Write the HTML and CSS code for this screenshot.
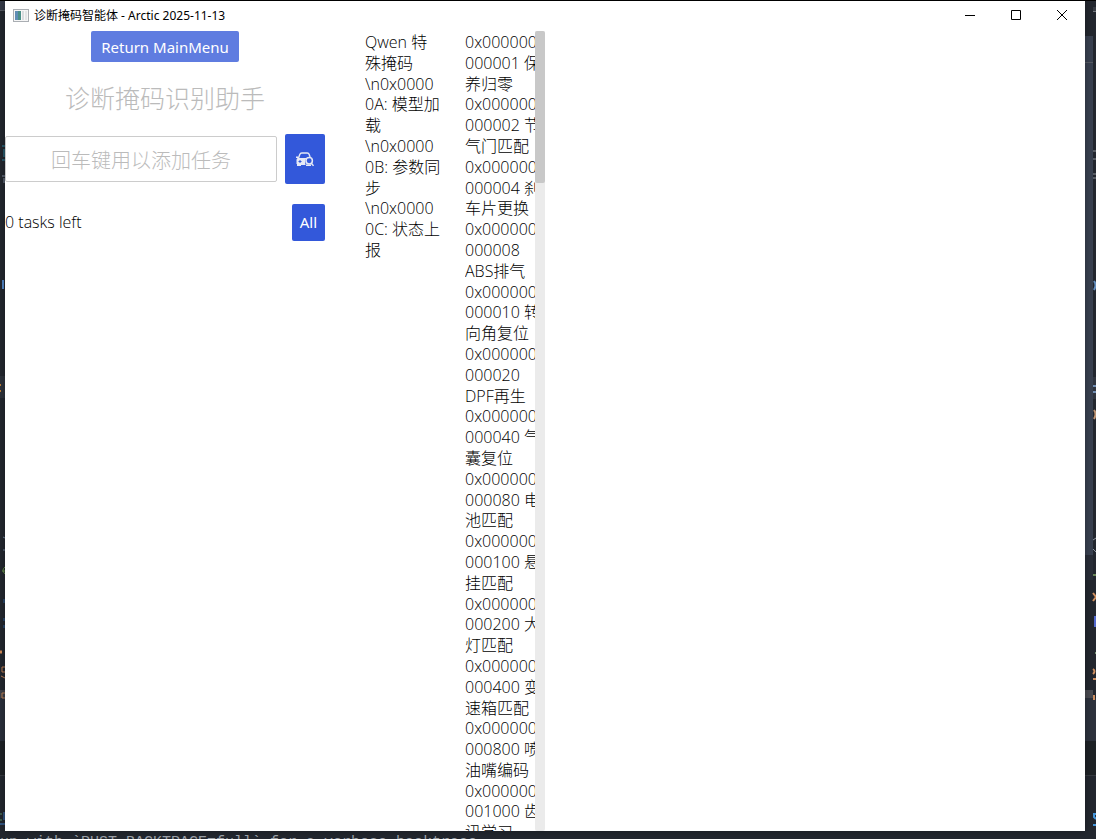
FILE: index.html
```
<!DOCTYPE html>
<html lang="zh-CN">

<head>
    <meta charset="UTF-8">
    <meta name="viewport" content="width=device-width, initial-scale=1.0">
    <title>诊断掩码智能体 - Arctic 2025-11-13</title>
    <link rel="stylesheet" href="styles.css">
</head>

<body>
    <!-- Editor behind the window -->
    <div class="desktop" aria-hidden="true">
        <svg class="edge edge-left" width="5" height="839">
            <rect width="5" height="839" fill="#23272f" />
            <rect width="5" height="10" fill="#343a48" />
            <rect y="10" width="5" height="1" fill="#555962" />
            <rect y="376" width="5" height="22" fill="#2d323b" />
            <rect y="690" width="5" height="8" fill="#3f4249" />
            <rect y="698" width="5" height="43" fill="#2b303c" />
            <rect y="741" width="5" height="34" fill="#1e2226" />
            <rect y="775" width="5" height="1" fill="#363a40" />
            <path d="M2 146h3M4 149v8M2 160h3" stroke="#2c8ba8" fill="none" />
            <path d="M2 176h3M4 178v5" stroke="#8793a8" fill="none" />
            <path d="M3 280v9" stroke="#5387c8" stroke-width="2" />
            <path d="M0 385h1M0 391h1" stroke="#c07f35" stroke-width="2" />
            <path d="M3 537l2 1M3 550h2" stroke="#73869e" />
            <path d="M5 567q-4 3 0 7M2 571h3" stroke="#68914c" fill="none" />
            <path d="M4 599v4M4 618v3M4 625v3" stroke="#2e65a0" />
            <path d="M0 652h2" stroke="#d28a57" stroke-width="3" />
            <path d="M5 667H2v5h3M1 676l4 2M5 693H2v5h3" stroke="#bf8057" fill="none" />
            <path d="M0 814h2M0 820h2" stroke="#5a946c" />
            <path d="M4 812v8M0 824h5" stroke="#4384d5" />
        </svg>
        <svg class="edge edge-right" width="11" height="839">
            <rect width="11" height="839" fill="#23272f" />
            <rect y="36" width="8" height="519" fill="#394150" />
            <rect y="62" width="8" height="1" fill="#575b64" />
            <rect y="555" width="8" height="25" fill="#292e38" />
            <rect x="8" y="7" width="3" height="4" fill="#383c44" />
            <rect x="8" y="11" width="3" height="1" fill="#73777e" />
            <rect x="8" y="377" width="3" height="22" fill="#30353f" />
            <rect y="690" width="8" height="8" fill="#4a4b51" />
            <rect y="698" width="11" height="43" fill="#2d323d" />
            <rect y="741" width="11" height="34" fill="#1e2226" />
            <rect y="775" width="11" height="1" fill="#373b41" />
            <path d="M8 151h3M8 159h3M8 174h3M8 178h3" stroke="#8d9199" />
            <path d="M9 281q3 4 0 9" stroke="#648fc0" fill="none" stroke-width="2" />
            <path d="M8 386h3M8 392h3" stroke="#718eb3" stroke-width="2" />
            <path d="M9 410q3 4 0 9" stroke="#c09573" fill="none" stroke-width="2" />
            <path d="M11 538l-3 2M8 549l3 3" stroke="#9097a2" />
            <path d="M8 575h3" stroke="#6a8759" stroke-width="2" />
            <path d="M8 593l3 4l-3 4" stroke="#cf9061" fill="none" stroke-width="2" />
            <path d="M10 616v11" stroke="#5268ce" stroke-width="2" />
            <path d="M10 653h1" stroke="#749174" stroke-width="2" />
            <path d="M8 669q3 2 0 5M8 679h3M9 695v5" stroke="#cf9061" fill="none" stroke-width="2" />
            <path d="M11 814H9v3l2 2M8 825h3" stroke="#4596dc" fill="none" stroke-width="2" />
        </svg>
    </div>

    <div class="window">
        <div class="titlebar">
            <svg class="app-icon" width="16" height="14" viewBox="0 0 16 14">
                <rect x="0.5" y="0.5" width="15" height="12" fill="#f6f6f6" stroke="#aaaeb3" />
                <rect x="2" y="2" width="6" height="9" fill="#4a8f88" />
                <path d="M2 2h3v9H2z" fill="#5f8db5" />
                <path d="M9 2h2v9H9z" fill="#d9dcdf" />
                <path d="M12 2h2v9h-2z" fill="#e3e5e7" />
            </svg>
            <span class="window-title">诊断掩码智能体 - Arctic 2025-11-13</span>
            <div class="window-controls">
                <button type="button" class="window-button" aria-label="Minimize">
                    <svg width="10" height="10" viewBox="0 0 10 10"><path d="M0 5.5h10" stroke="#000" /></svg>
                </button>
                <button type="button" class="window-button" aria-label="Maximize">
                    <svg width="10" height="10" viewBox="0 0 10 10"><path d="M0.5 0.5h9v9h-9z" fill="none" stroke="#000" /></svg>
                </button>
                <button type="button" class="window-button" aria-label="Close">
                    <svg width="10" height="10" viewBox="0 0 10 10"><path d="M0 0l10 10M10 0L0 10" stroke="#000" /></svg>
                </button>
            </div>
        </div>

        <main class="content">
            <section class="task-panel">
                <button type="button" class="button return-button">Return MainMenu</button>
                <h1 class="heading">诊断掩码识别助手</h1>
                <form class="task-form">
                    <input type="text" class="task-input" placeholder="回车键用以添加任务" aria-label="回车键用以添加任务">
                    <button type="button" class="button scan-button" aria-label="Diagnose">
                        <svg width="18" height="15" viewBox="0 0 18 15">
                            <path d="M2.5 6L3.8 2.4Q4.3 1 5.8 1h5.4q1.5 0 2 1.4l.9 2.6" fill="none" stroke="#e6e9f5" stroke-width="1.4" />
                            <path d="M0 4.5h2L3 6h7.5Q8.2 8.5 9.6 13H5v1H1v-2H.5V7.5L1.5 6H0z" fill="#e6e9f5" />
                            <path d="M2.5 9.5h3M4 8v3" stroke="#3358da" />
                            <circle cx="13.2" cy="8.8" r="3.2" fill="#3358da" stroke="#e6e9f5" stroke-width="1.5" />
                            <path d="M15.3 11.2l2.2 2.6M10 13.3h5" stroke="#e6e9f5" stroke-width="1.4" />
                        </svg>
                    </button>
                </form>
                <div class="task-footer">
                    <span>0 tasks left</span>
                    <button type="button" class="button filter-button">All</button>
                </div>
            </section>

            <section class="qwen-masks">Qwen 特<br>殊掩码<br>\n0x0000<br>0A: 模型加<br>载<br>\n0x0000<br>0B: 参数同<br>步<br>\n0x0000<br>0C: 状态上<br>报</section>

            <section class="mask-list">
                <div class="mask-text">
                    <p>0x000000<br>000001 保<br>养归零</p>
                    <p>0x000000<br>000002 节<br>气门匹配</p>
                    <p>0x000000<br>000004 刹<br>车片更换</p>
                    <p>0x000000<br>000008<br>ABS排气</p>
                    <p>0x000000<br>000010 转<br>向角复位</p>
                    <p>0x000000<br>000020<br>DPF再生</p>
                    <p>0x000000<br>000040 气<br>囊复位</p>
                    <p>0x000000<br>000080 电<br>池匹配</p>
                    <p>0x000000<br>000100 悬<br>挂匹配</p>
                    <p>0x000000<br>000200 大<br>灯匹配</p>
                    <p>0x000000<br>000400 变<br>速箱匹配</p>
                    <p>0x000000<br>000800 喷<br>油嘴编码</p>
                    <p>0x000000<br>001000 齿<br>讯学习</p>
                </div>
                <div class="scroll-track">
                    <div class="scroll-thumb"></div>
                </div>
            </section>
        </main>
    </div>

    <div class="terminal">un with `RUST_BACKTRACE=full` for a verbose backtrace.</div>
</body>

</html>
```

FILE: styles.css
```
* {
    box-sizing: border-box;
}

body {
    display: flex;
    flex-direction: column;
    height: 100vh;
    margin: 0;
    overflow: hidden;
    background-color: #23272f;
    border-top: 1px solid #000;
    color: #000;
    font-family: "Open Sans", "Noto Sans CJK SC", sans-serif;
    font-size: 16px;
    font-weight: 300;
    line-height: 1.3;
}

/* Editor visible around the window */
.desktop {
    position: absolute;
    top: 0;
    left: 0;
    right: 0;
    height: 100vh;
    overflow: hidden;
    border-top: 1px solid #000;
}

.edge {
    position: absolute;
    top: -1px;
}

.edge-left {
    left: 0;
}

.edge-right {
    right: 0;
}

.terminal {
    position: relative;
    flex: none;
    height: 8px;
    padding-top: 2px;
    overflow: hidden;
    color: #9a9fa6;
    font-family: "Liberation Mono", monospace;
    font-size: 15px;
    line-height: 20px;
    white-space: nowrap;
}

/* Application window */
.window {
    position: relative;
    display: flex;
    flex-direction: column;
    flex: 1;
    min-height: 0;
    margin: 0 11px 0 5px;
    background-color: #fff;
    box-shadow: 0 0 8px rgba(0, 0, 0, 0.35);
}

.titlebar {
    display: flex;
    align-items: center;
    flex: none;
    height: 30px;
    padding-left: 8px;
    font-size: 12px;
    font-weight: 400;
}

.app-icon {
    margin-right: 5px;
}

.window-title {
    font-family: "Noto Sans", "Noto Sans CJK SC", sans-serif;
}

.window-controls {
    display: flex;
    height: 100%;
    margin-left: auto;
}

.window-button {
    display: flex;
    align-items: center;
    justify-content: center;
    width: 46px;
    padding: 0 0 2px;
    border: none;
    background: none;
}

.content {
    display: flex;
    flex: 1;
    min-height: 0;
}

/* Task panel */
.task-panel {
    display: flex;
    flex-direction: column;
    align-items: stretch;
    gap: 20px;
    width: 320px;
    margin-right: 40px;
}

.button {
    border: none;
    border-radius: 2px;
    background-color: #3358da;
    color: #fff;
    font-family: "Noto Sans", sans-serif;
    font-size: 15px;
    line-height: 21px;
    cursor: pointer;
}

.return-button {
    align-self: center;
    padding: 6px 10px 4px;
    background-color: #5f7ce0;
}

.heading {
    margin: 0;
    color: #bbb;
    font-size: 25px;
    font-weight: 300;
    line-height: 32px;
    text-align: center;
}

.task-form {
    display: flex;
    align-items: center;
    gap: 8px;
}

.task-input {
    flex: 1;
    min-width: 0;
    height: 46px;
    padding: 2px 10px 0;
    border: 1px solid #ccc;
    border-radius: 2px;
    font-family: inherit;
    font-size: 20px;
    font-weight: 300;
    text-align: center;
}

.task-input::placeholder {
    color: #bbb;
}

.scan-button {
    display: flex;
    align-items: center;
    justify-content: center;
    width: 40px;
    height: 50px;
    padding: 0;
}

.task-footer {
    display: flex;
    align-items: center;
    justify-content: space-between;
}

.filter-button {
    padding: 8px;
}

/* Mask columns */
.qwen-masks {
    width: 80px;
    margin-right: 20px;
    padding-top: 1px;
    white-space: nowrap;
}

.mask-list {
    display: flex;
    width: 80px;
    overflow: hidden;
}

.mask-text {
    flex: 1;
    min-width: 0;
    padding-top: 1px;
    overflow: hidden;
    white-space: nowrap;
}

.mask-text p {
    margin: 0;
}

.scroll-track {
    flex: none;
    width: 10px;
    border-radius: 2px;
    background-color: #ebebeb;
}

.scroll-thumb {
    height: 19%;
    border-radius: 2px;
    background-color: #c8c8c8;
}
```
